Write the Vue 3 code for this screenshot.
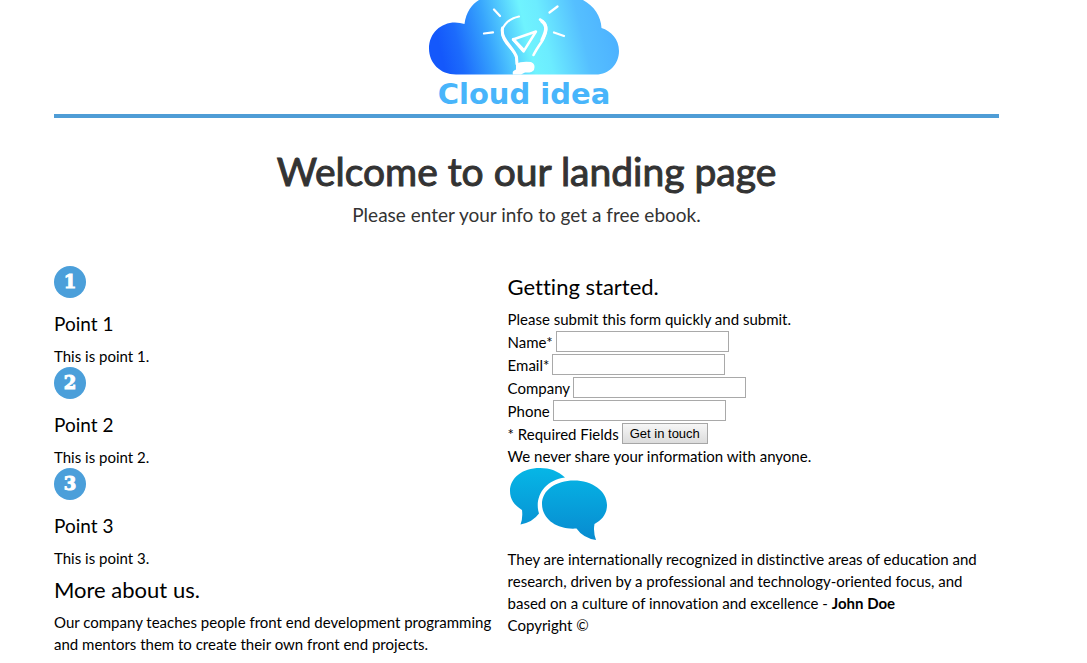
<script setup>
const points = [1, 2, 3]
const fields = [
  { id: 'name', label: 'Name*', type: 'text' },
  { id: 'email', label: 'Email*', type: 'email' },
  { id: 'company', label: 'Company', type: 'text' },
  { id: 'phone', label: 'Phone', type: 'tel' },
]
</script>

<template>
  <div class="page">
    <header class="brand">
      <svg class="logo" viewBox="0 0 196 114" role="img" aria-label="Cloud idea">
        <defs>
          <linearGradient id="sky" x1="0" x2="1" y1="0.1" y2="0">
            <stop offset="0" stop-color="#1458fb" />
            <stop offset="0.1" stop-color="#1c6bfc" />
            <stop offset="0.26" stop-color="#36a3fd" />
            <stop offset="0.47" stop-color="#6ff3fe" />
            <stop offset="0.56" stop-color="#6cecff" />
            <stop offset="0.76" stop-color="#55bfff" />
            <stop offset="1" stop-color="#4aadff" />
          </linearGradient>
        </defs>
        <path fill="url(#sky)" d="M27 74.500C11 74.500 0 63 0 48.500C0 33 12 22.500 26 22.500Q31 22.500 35.500 24C37 12 43 4 50 0V-4H154V0C165 6 172 16 172.500 28C182 31 190 39 190 51C190 64 180 74.500 167 74.500Z" />
        <g fill="none" stroke="#fff" stroke-linecap="round" stroke-linejoin="round">
          <path stroke-width="2.200" d="M65 9.500l6 6.500M128.500 6.500l-8 6M55 33.500l9-1.200M125 32.500l10 3.500" />
          <path stroke-width="2.200" d="M90 16.500C81 18 73 25 73 33C73 43 86 50 87 57Q88 60 88 65" />
          <path stroke-width="3" d="M73.500 28C71 39 85 48 87.500 57L88 64" />
          <path stroke-width="2.600" d="M111 19.500C120 24 118 33 112.500 42Q107 50 104.500 55" />
          <path stroke-width="3.400" d="M113 21.500C119 26 117 32 113 40" />
          <path stroke-width="2.400" d="M107 31.500L84 39.500L94.500 51.500Z" />
          <path stroke-width="3.200" d="M84.500 39.500L94 49.500" />
        </g>
        <path fill="#fff" d="M87 64Q92 61 102 62Q107 64 105 70Q103 73 96 72.500L92 74.500H84Q82.500 71 87 69.500Z" />
        <text x="95" y="104" text-anchor="middle" class="logo-text">Cloud idea</text>
      </svg>
    </header>

    <main>
      <section class="intro">
        <h1>Welcome to our landing page</h1>
        <p>Please enter your info to get a free ebook.</p>
      </section>

      <div class="columns">
        <div class="column">
          <section v-for="n in points" :key="n">
            <svg class="badge" viewBox="0 0 32 32" aria-hidden="true">
              <circle cx="16" cy="16" r="16" fill="#4b9fda" />
              <text x="16" y="22" text-anchor="middle" class="badge-text">{{ n }}</text>
            </svg>
            <h3>Point {{ n }}</h3>
            <p>This is point {{ n }}.</p>
          </section>
          <section>
            <h2>More about us.</h2>
            <p>Our company teaches people front end development programming and mentors them to create their own front end projects.</p>
          </section>
        </div>

        <div class="column start">
          <h2>Getting started.</h2>
          <p>Please submit this form quickly and submit.</p>
          <form @submit.prevent>
            <div v-for="f in fields" :key="f.id" class="row">
              <label :for="f.id">{{ f.label }}</label>
              <input :id="f.id" :name="f.id" :type="f.type" />
            </div>
            <div class="row">
              <span>* Required Fields</span>
              <button type="submit">Get in touch</button>
            </div>
          </form>
          <p>We never share your information with anyone.</p>
          <svg class="chat" viewBox="0 -1 102 81" aria-hidden="true">
            <defs>
              <linearGradient id="bubble" x1="0" y1="0" x2="0" y2="72" gradientUnits="userSpaceOnUse">
                <stop offset="0" stop-color="#06b6e6" />
                <stop offset="1" stop-color="#088bd0" />
              </linearGradient>
            </defs>
            <path fill="url(#bubble)" d="M57 9.500C50 3 42 0 32 0C14 0 2 10 2 23C2 31 6 37 14 42Q15 50 12.500 56.500Q25 54 31 45.500C26 30 36 12 57 9.500Z" />
            <path fill="url(#bubble)" d="M66 12.500C84 12.500 99 23 99 37C99 46 94 52 86.500 56Q85 64 88 72Q75 70 68.500 60.500C49 62 34 51 34 36C34 22 48 12.500 66 12.500Z" />
          </svg>
          <p>They are internationally recognized in distinctive areas of education and research, driven by a professional and technology-oriented focus, and based on a culture of innovation and excellence - <strong>John Doe</strong></p>
          <footer>Copyright ©</footer>
        </div>
      </div>
    </main>
  </div>
</template>

<style>
body {
  margin: 0;
  background: #fff;
}
</style>

<style scoped>
.page {
  margin: 0 88px 0 54px;
  font-family: Lato, sans-serif;
  font-size: 15px;
  line-height: 22px;
  font-variant-ligatures: none;
  color: #000;
}
h1, h2, h3, p {
  margin: 0;
  font-weight: 400;
}
.brand {
  display: flex;
  justify-content: center;
  height: 114px;
  border-bottom: 4px solid #4f9dd6;
}
.logo {
  width: 196px;
  height: 114px;
}
.logo-text {
  font: bold 29px "DejaVu Sans", sans-serif;
  fill: #48b5fb;
}
.intro {
  padding: 29px 0 39px;
  text-align: center;
  color: #333;
}
.intro h1 {
  font-size: 39px;
  line-height: 48px;
  -webkit-text-stroke: 1px #333;
}
.intro p {
  font-size: 19px;
  line-height: 24px;
  padding-top: 8px;
}
.columns {
  display: flex;
  align-items: flex-start;
}
.column {
  width: 48%;
}
.start {
  width: 51%;
  padding-top: 9px;
}
h2 {
  font-size: 22px;
  line-height: 24px;
  padding: 9px 0;
}
.start h2 {
  padding-top: 0;
}
h3 {
  font-size: 19px;
  line-height: 24px;
  padding: 14px 0 9px;
}
.badge {
  display: block;
  width: 32px;
  height: 32px;
}
.badge-text {
  font: bold 18px "DejaVu Serif", serif;
  fill: #fff;
  stroke: #fff;
  stroke-width: 1px;
}
.row {
  display: flex;
  align-items: center;
  gap: 3px;
  height: 23px;
}
input {
  box-sizing: border-box;
  width: 173px;
  height: 21px;
  padding: 1px 2px;
  border: 1px solid #a9a9a9;
  background: #fff;
  font: 13px "Liberation Sans", sans-serif;
}
button {
  box-sizing: border-box;
  height: 21px;
  padding: 0 7px;
  border: 1px solid #a6a6a6;
  background: linear-gradient(#f6f6f6, #dcdcdc);
  font: 13px "Liberation Sans", sans-serif;
  color: #000;
}
.chat {
  display: block;
  width: 102px;
  height: 81px;
}
strong {
  font-weight: 700;
}
</style>
